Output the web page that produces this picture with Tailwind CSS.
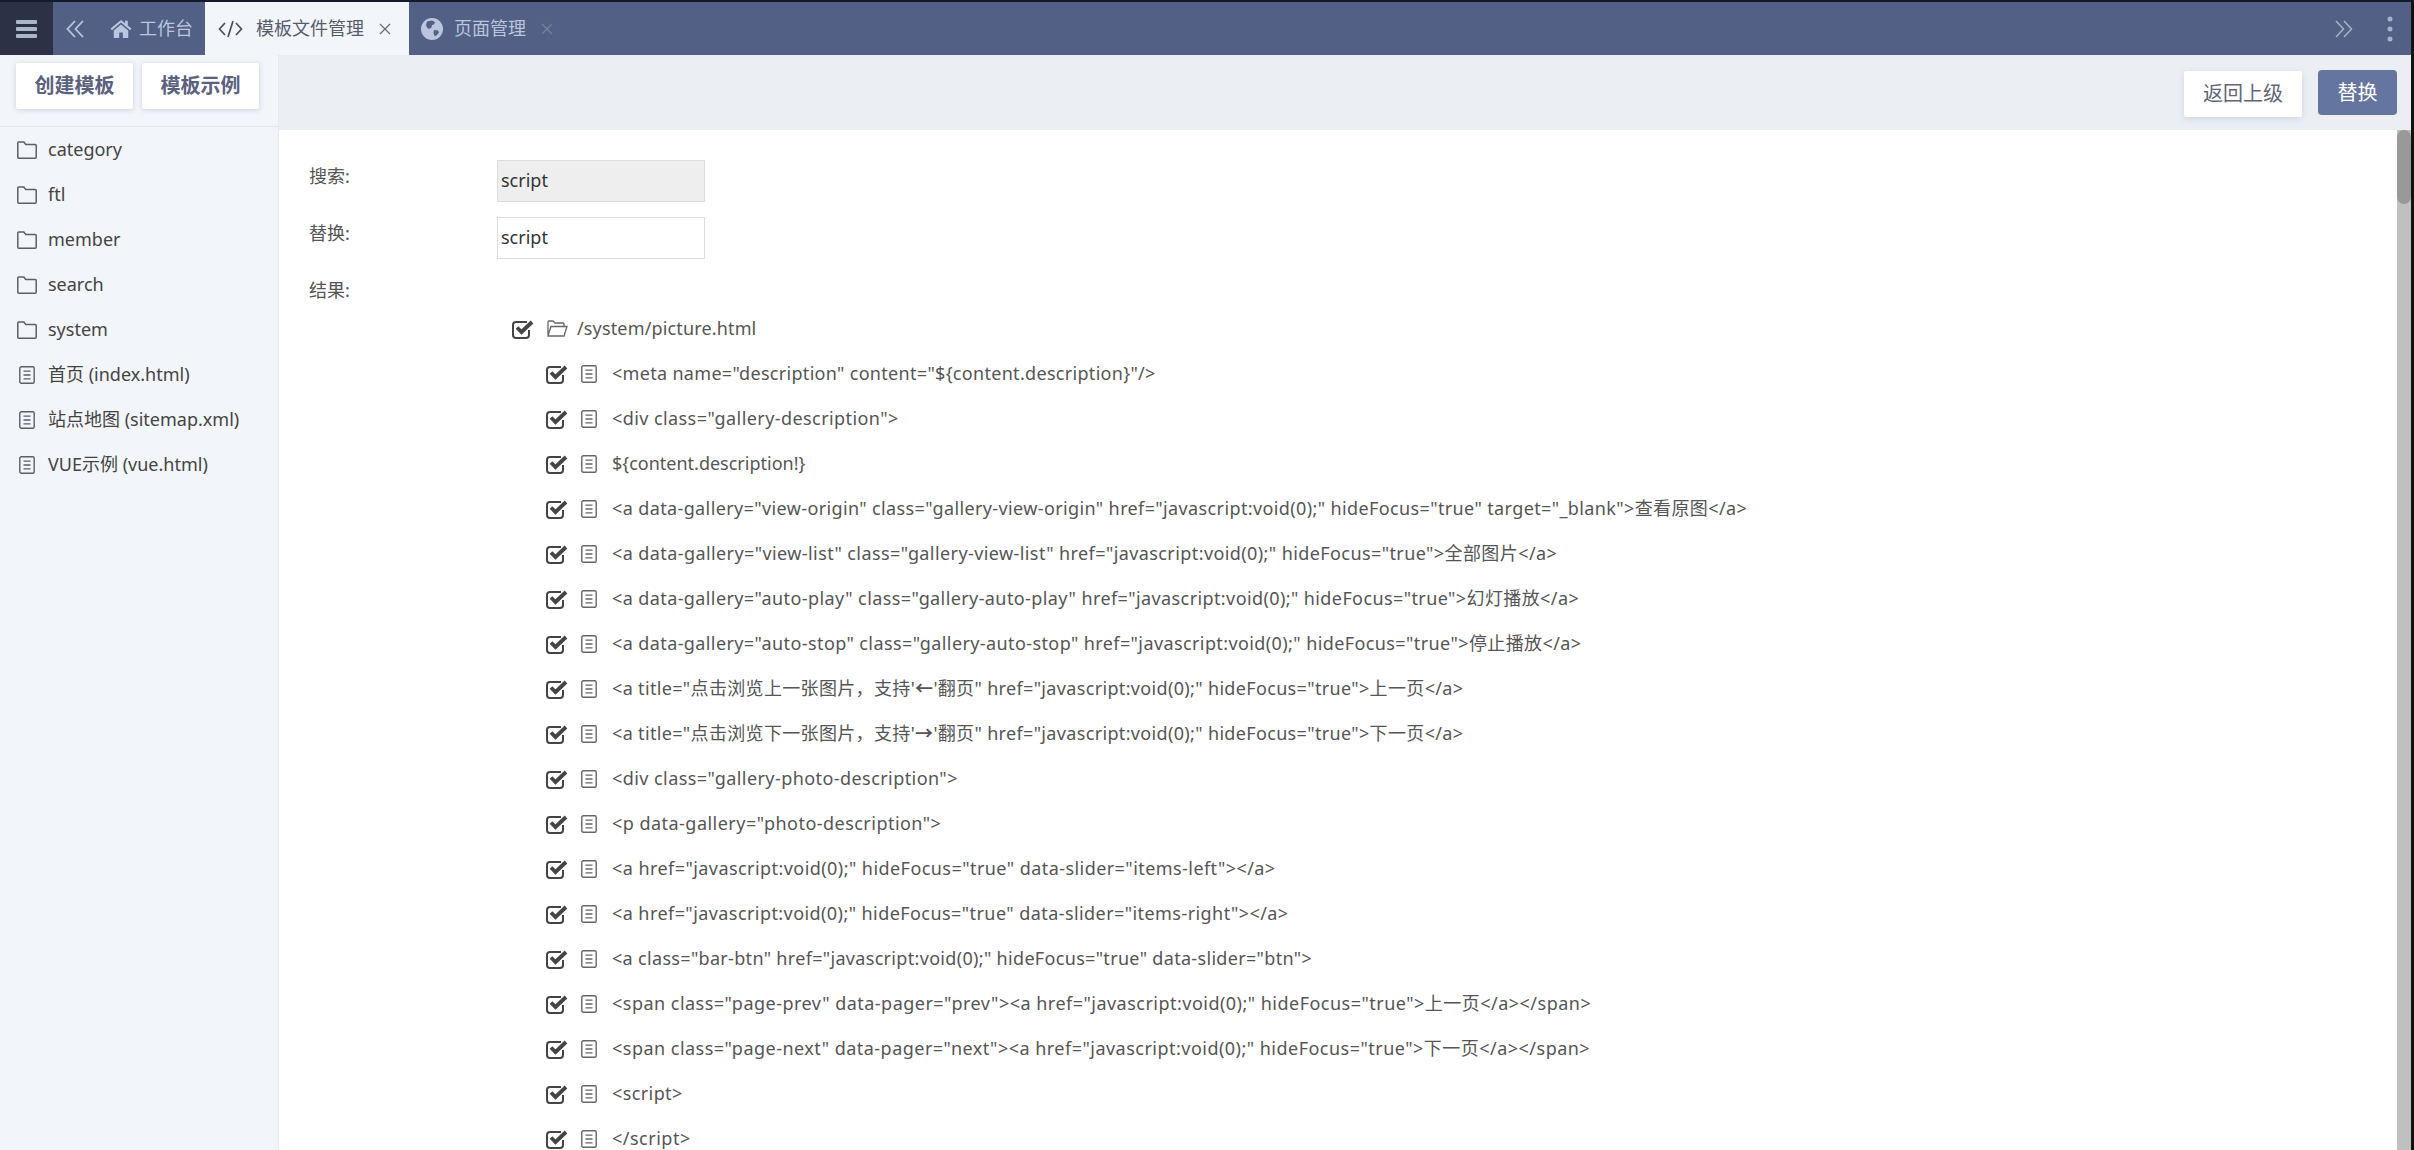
<!DOCTYPE html>
<html lang="zh-CN">
<head>
    <meta charset="UTF-8">
    <title>模板文件管理</title>
    <script src="https://cdn.jsdelivr.net/npm/@tailwindcss/browser@4"></script>
</head>
<body class="bg-[#111111] font-['Noto_Sans','Noto_Sans_CJK_SC',sans-serif] text-[18px] text-[#555555]">
    <!-- shared icons -->
    <svg class="hidden">
        <symbol id="i-folder" viewBox="0 0 20 18"><path d="M1.8 1h5l2 2.500h9.400a1 1 0 0 1 1 1v11.700a1 1 0 0 1-1 1H1.800a1 1 0 0 1-1-1V2a1 1 0 0 1 1-1z" fill="none" stroke="currentColor" stroke-width="1.500"/></symbol>
        <symbol id="i-file" viewBox="0 0 16 18"><rect x="0.8" y="0.8" width="14.4" height="16.4" rx="1.5" fill="none" stroke="currentColor" stroke-width="1.4"/><path d="M4.5 5.2h7M4.5 9h7M4.5 12.8h7" stroke="currentColor" stroke-width="1.3"/></symbol>
        <symbol id="i-check" viewBox="0 0 22 20"><path d="M15 3H4a3 3 0 0 0-3 3v10a3 3 0 0 0 3 3h10a3 3 0 0 0 3-3v-5" fill="none" stroke="currentColor" stroke-width="2"/><path d="M5 8.500l4.500 4.500L20 3" fill="none" stroke="currentColor" stroke-width="3.800"/></symbol>
    </svg>

    <div class="w-[2411px] h-[1150px] flex flex-col overflow-hidden bg-white">
        <!-- top tabs -->
        <div class="h-[2px] bg-[#151a2a] shrink-0"></div>
        <div class="h-[53px] shrink-0 flex items-center bg-[#536085] text-[#b9c6dd]">
            <div class="w-[53px] h-full bg-[#2c3146] flex items-center justify-center">
                <svg class="w-[21px] h-[18px] text-[#a9b8c8]" viewBox="0 0 21 18" fill="currentColor"><rect width="21" height="4" rx="1"/><rect y="7" width="21" height="4" rx="1"/><rect y="14" width="21" height="4" rx="1"/></svg>
            </div>
            <svg class="ml-[13px] w-[18px] h-[18px]" viewBox="0 0 18 18" fill="none" stroke="currentColor" stroke-width="1.8"><path d="M9 1L1.500 9 9 17M17 1L9.500 9l7.500 8"/></svg>
            <svg class="ml-[26px] w-[22px] h-[19px]" viewBox="0 0 24 21" fill="currentColor"><path d="M12 1L0.500 10.500l1.500 1.800L12 4l10 8.300 1.500-1.800-4-3.400V2h-3v2.600z"/><path d="M12 6L4 12.700V21h6v-6h4v6h6v-8.300z"/></svg>
            <span class="ml-[7px] w-[66px]">工作台</span>
            <div class="w-[204px] h-full bg-[#f2f5f9] flex items-center text-[#555c70]">
                <svg class="ml-[13px] w-[25px] h-[18px] text-[#4a5060]" viewBox="0 0 25 18" fill="none" stroke="currentColor" stroke-width="1.7"><path d="M7 3L1.500 9 7 15M18 3l5.500 6L18 15M15 1l-5 16"/></svg>
                <span class="ml-[13px] w-[108px]">模板文件管理</span>
                <svg class="ml-[15px] w-[12px] h-[12px] text-[#666c7c]" viewBox="0 0 12 12" fill="none" stroke="currentColor" stroke-width="1.2"><path d="M1 1l10 10M11 1L1 11"/></svg>
            </div>
            <svg class="ml-[12px] w-[22px] h-[22px]" viewBox="0 0 22 22"><circle cx="11" cy="11" r="11" fill="currentColor"/><path d="M6 3.500l5-1 3 1.500-1 2.500-2 .5-.5 2.500-2.500 1.500-2-1.500-1-2.500zM13 12l4 .5 1 2-2.500 3-2 .5-1-3z" fill="#536085"/></svg>
            <span class="ml-[11px] w-[72px]">页面管理</span>
            <svg class="ml-[15px] w-[12px] h-[12px] text-[#74819f]" viewBox="0 0 12 12" fill="none" stroke="currentColor" stroke-width="1.400"><path d="M1 1l10 10M11 1L1 11"/></svg>
            <svg class="ml-auto w-[18px] h-[18px] text-[#a5b2cd]" viewBox="0 0 18 18" fill="none" stroke="currentColor" stroke-width="1.5"><path d="M1 1l7.500 8L1 17M9 1l7.500 8L9 17"/></svg>
            <svg class="ml-[34px] mr-[18px] w-[6px] h-[26px] text-[#a5b2cd]" viewBox="0 0 6 26" fill="currentColor"><circle cx="3" cy="3" r="2.500"/><circle cx="3" cy="13" r="2.500"/><circle cx="3" cy="23" r="2.500"/></svg>
        </div>

        <div class="flex-1 flex min-h-0">
            <!-- sidebar -->
            <div class="w-[279px] shrink-0 bg-[#f2f5f9] text-[#444444] border-r border-[#e6eaef]">
                <div class="h-[72px] flex items-start gap-[9px] pl-[16px] pt-[8px] border-b border-[#e3e7ec]">
                    <button class="w-[117px] h-[46px] bg-white font-bold text-[20px] text-[#5b6280] shadow-[0_1px_5px_rgba(90,110,150,0.25)] rounded-[2px]">创建模板</button>
                    <button class="w-[117px] h-[46px] bg-white font-bold text-[20px] text-[#5b6280] shadow-[0_1px_5px_rgba(90,110,150,0.25)] rounded-[2px]">模板示例</button>
                </div>
                <div class="h-[45px] flex items-center pl-[17px]"><svg class="w-[20px] h-[18px] text-[#5a5f68] mr-[11px]"><use href="#i-folder"/></svg>category</div>
                <div class="h-[45px] flex items-center pl-[17px]"><svg class="w-[20px] h-[18px] text-[#5a5f68] mr-[11px]"><use href="#i-folder"/></svg>ftl</div>
                <div class="h-[45px] flex items-center pl-[17px]"><svg class="w-[20px] h-[18px] text-[#5a5f68] mr-[11px]"><use href="#i-folder"/></svg>member</div>
                <div class="h-[45px] flex items-center pl-[17px]"><svg class="w-[20px] h-[18px] text-[#5a5f68] mr-[11px]"><use href="#i-folder"/></svg>search</div>
                <div class="h-[45px] flex items-center pl-[17px]"><svg class="w-[20px] h-[18px] text-[#5a5f68] mr-[11px]"><use href="#i-folder"/></svg>system</div>
                <div class="h-[45px] flex items-center pl-[19px]"><svg class="w-[16px] h-[18px] text-[#5a5f68] mr-[13px]"><use href="#i-file"/></svg>首页 (index.html)</div>
                <div class="h-[45px] flex items-center pl-[19px]"><svg class="w-[16px] h-[18px] text-[#5a5f68] mr-[13px]"><use href="#i-file"/></svg>站点地图 (sitemap.xml)</div>
                <div class="h-[45px] flex items-center pl-[19px]"><svg class="w-[16px] h-[18px] text-[#5a5f68] mr-[13px]"><use href="#i-file"/></svg>VUE示例 (vue.html)</div>
            </div>

            <div class="flex-1 flex flex-col min-w-0">
                <!-- toolbar -->
                <div class="h-[75px] shrink-0 bg-[#ebeff4] flex items-start justify-end gap-[16px] pr-[14px] pt-[15px]">
                    <button class="mt-[1px] w-[118px] h-[46px] bg-white text-[20px] text-[#5f6678] shadow-[0_2px_6px_rgba(90,110,150,0.2)] rounded-[2px]">返回上级</button>
                    <button class="w-[79px] h-[45px] bg-[#64769f] text-[20px] text-white rounded-[4px]">替换</button>
                </div>

                <div class="flex-1 flex min-h-0">
                    <div class="flex-1 overflow-hidden pl-[30px] pt-[30px]">
                        <div class="flex items-start h-[42px]">
                            <span class="w-[188px] leading-[32px]">搜索:</span>
                            <div class="w-[208px] h-[42px] bg-[#eeeeee] border border-[#dddddd] pl-[3px] pb-[2px] flex items-center text-[#333333]">script</div>
                        </div>
                        <div class="flex items-start h-[42px] mt-[15px]">
                            <span class="w-[188px] leading-[32px]">替换:</span>
                            <div class="w-[208px] h-[42px] bg-white border border-[#dddddd] pl-[3px] pb-[2px] flex items-center text-[#333333]">script</div>
                        </div>
                        <div class="mt-[15px] leading-[32px]">结果:</div>

                        <!-- result tree -->
                        <div class="h-[45px] flex items-center pl-[203px]">
                            <svg class="w-[22px] h-[20px] text-[#444444]"><use href="#i-check"/></svg>
                            <svg class="ml-[13px] w-[21px] h-[17px] text-[#666666]" viewBox="0 0 21 17" fill="none" stroke="currentColor" stroke-width="1.300"><path d="M1 15V2a1 1 0 0 1 1-1h4l2 2h8a1 1 0 0 1 1 1v2.500M1 15.500l3-9h16l-3 9.500H1z"/></svg>
                            <span class="ml-[9px] tracking-[0.15px]">/system/picture.html</span>
                        </div>
                        <div class="h-[45px] flex items-center pl-[237px]"><svg class="w-[22px] h-[20px] text-[#444444]"><use href="#i-check"/></svg><svg class="ml-[13px] w-[16px] h-[18px] text-[#666666]"><use href="#i-file"/></svg><span class="ml-[15px] tracking-[0.31px]">&lt;meta name="description" content="${content.description}"/&gt;</span></div>
                        <div class="h-[45px] flex items-center pl-[237px]"><svg class="w-[22px] h-[20px] text-[#444444]"><use href="#i-check"/></svg><svg class="ml-[13px] w-[16px] h-[18px] text-[#666666]"><use href="#i-file"/></svg><span class="ml-[15px] tracking-[0.42px]">&lt;div class="gallery-description"&gt;</span></div>
                        <div class="h-[45px] flex items-center pl-[237px]"><svg class="w-[22px] h-[20px] text-[#444444]"><use href="#i-check"/></svg><svg class="ml-[13px] w-[16px] h-[18px] text-[#666666]"><use href="#i-file"/></svg><span class="ml-[15px]">${content.description!}</span></div>
                        <div class="h-[45px] flex items-center pl-[237px]"><svg class="w-[22px] h-[20px] text-[#444444]"><use href="#i-check"/></svg><svg class="ml-[13px] w-[16px] h-[18px] text-[#666666]"><use href="#i-file"/></svg><span class="ml-[15px] tracking-[0.38px]">&lt;a data-gallery="view-origin" class="gallery-view-origin" href="javascript:void(0);" hideFocus="true" target="_blank"&gt;查看原图&lt;/a&gt;</span></div>
                        <div class="h-[45px] flex items-center pl-[237px]"><svg class="w-[22px] h-[20px] text-[#444444]"><use href="#i-check"/></svg><svg class="ml-[13px] w-[16px] h-[18px] text-[#666666]"><use href="#i-file"/></svg><span class="ml-[15px] tracking-[0.41px]">&lt;a data-gallery="view-list" class="gallery-view-list" href="javascript:void(0);" hideFocus="true"&gt;全部图片&lt;/a&gt;</span></div>
                        <div class="h-[45px] flex items-center pl-[237px]"><svg class="w-[22px] h-[20px] text-[#444444]"><use href="#i-check"/></svg><svg class="ml-[13px] w-[16px] h-[18px] text-[#666666]"><use href="#i-file"/></svg><span class="ml-[15px] tracking-[0.4px]">&lt;a data-gallery="auto-play" class="gallery-auto-play" href="javascript:void(0);" hideFocus="true"&gt;幻灯播放&lt;/a&gt;</span></div>
                        <div class="h-[45px] flex items-center pl-[237px]"><svg class="w-[22px] h-[20px] text-[#444444]"><use href="#i-check"/></svg><svg class="ml-[13px] w-[16px] h-[18px] text-[#666666]"><use href="#i-file"/></svg><span class="ml-[15px] tracking-[0.4px]">&lt;a data-gallery="auto-stop" class="gallery-auto-stop" href="javascript:void(0);" hideFocus="true"&gt;停止播放&lt;/a&gt;</span></div>
                        <div class="h-[45px] flex items-center pl-[237px]"><svg class="w-[22px] h-[20px] text-[#444444]"><use href="#i-check"/></svg><svg class="ml-[13px] w-[16px] h-[18px] text-[#666666]"><use href="#i-file"/></svg><span class="ml-[15px] tracking-[0.34px]">&lt;a title="点击浏览上一张图片，支持'<b>←</b>'翻页" href="javascript:void(0);" hideFocus="true"&gt;上一页&lt;/a&gt;</span></div>
                        <div class="h-[45px] flex items-center pl-[237px]"><svg class="w-[22px] h-[20px] text-[#444444]"><use href="#i-check"/></svg><svg class="ml-[13px] w-[16px] h-[18px] text-[#666666]"><use href="#i-file"/></svg><span class="ml-[15px] tracking-[0.34px]">&lt;a title="点击浏览下一张图片，支持'<b>→</b>'翻页" href="javascript:void(0);" hideFocus="true"&gt;下一页&lt;/a&gt;</span></div>
                        <div class="h-[45px] flex items-center pl-[237px]"><svg class="w-[22px] h-[20px] text-[#444444]"><use href="#i-check"/></svg><svg class="ml-[13px] w-[16px] h-[18px] text-[#666666]"><use href="#i-file"/></svg><span class="ml-[15px] tracking-[0.43px]">&lt;div class="gallery-photo-description"&gt;</span></div>
                        <div class="h-[45px] flex items-center pl-[237px]"><svg class="w-[22px] h-[20px] text-[#444444]"><use href="#i-check"/></svg><svg class="ml-[13px] w-[16px] h-[18px] text-[#666666]"><use href="#i-file"/></svg><span class="ml-[15px] tracking-[0.47px]">&lt;p data-gallery="photo-description"&gt;</span></div>
                        <div class="h-[45px] flex items-center pl-[237px]"><svg class="w-[22px] h-[20px] text-[#444444]"><use href="#i-check"/></svg><svg class="ml-[13px] w-[16px] h-[18px] text-[#666666]"><use href="#i-file"/></svg><span class="ml-[15px] tracking-[0.44px]">&lt;a href="javascript:void(0);" hideFocus="true" data-slider="items-left"&gt;&lt;/a&gt;</span></div>
                        <div class="h-[45px] flex items-center pl-[237px]"><svg class="w-[22px] h-[20px] text-[#444444]"><use href="#i-check"/></svg><svg class="ml-[13px] w-[16px] h-[18px] text-[#666666]"><use href="#i-file"/></svg><span class="ml-[15px] tracking-[0.43px]">&lt;a href="javascript:void(0);" hideFocus="true" data-slider="items-right"&gt;&lt;/a&gt;</span></div>
                        <div class="h-[45px] flex items-center pl-[237px]"><svg class="w-[22px] h-[20px] text-[#444444]"><use href="#i-check"/></svg><svg class="ml-[13px] w-[16px] h-[18px] text-[#666666]"><use href="#i-file"/></svg><span class="ml-[15px] tracking-[0.32px]">&lt;a class="bar-btn" href="javascript:void(0);" hideFocus="true" data-slider="btn"&gt;</span></div>
                        <div class="h-[45px] flex items-center pl-[237px]"><svg class="w-[22px] h-[20px] text-[#444444]"><use href="#i-check"/></svg><svg class="ml-[13px] w-[16px] h-[18px] text-[#666666]"><use href="#i-file"/></svg><span class="ml-[15px] tracking-[0.48px]">&lt;span class="page-prev" data-pager="prev"&gt;&lt;a href="javascript:void(0);" hideFocus="true"&gt;上一页&lt;/a&gt;&lt;/span&gt;</span></div>
                        <div class="h-[45px] flex items-center pl-[237px]"><svg class="w-[22px] h-[20px] text-[#444444]"><use href="#i-check"/></svg><svg class="ml-[13px] w-[16px] h-[18px] text-[#666666]"><use href="#i-file"/></svg><span class="ml-[15px] tracking-[0.48px]">&lt;span class="page-next" data-pager="next"&gt;&lt;a href="javascript:void(0);" hideFocus="true"&gt;下一页&lt;/a&gt;&lt;/span&gt;</span></div>
                        <div class="h-[45px] flex items-center pl-[237px]"><svg class="w-[22px] h-[20px] text-[#444444]"><use href="#i-check"/></svg><svg class="ml-[13px] w-[16px] h-[18px] text-[#666666]"><use href="#i-file"/></svg><span class="ml-[15px] tracking-[0.4px]">&lt;script&gt;</span></div>
                        <div class="h-[45px] flex items-center pl-[237px]"><svg class="w-[22px] h-[20px] text-[#444444]"><use href="#i-check"/></svg><svg class="ml-[13px] w-[16px] h-[18px] text-[#666666]"><use href="#i-file"/></svg><span class="ml-[15px] tracking-[0.5px]">&lt;/script&gt;</span></div>
                    </div>
                    <!-- scrollbar -->
                    <div class="w-[14px] shrink-0 bg-[#c0c0c0]">
                        <div class="h-[74px] bg-[#999999] rounded-[7px]"></div>
                    </div>
                </div>
            </div>
        </div>
    </div>
</body>
</html>
